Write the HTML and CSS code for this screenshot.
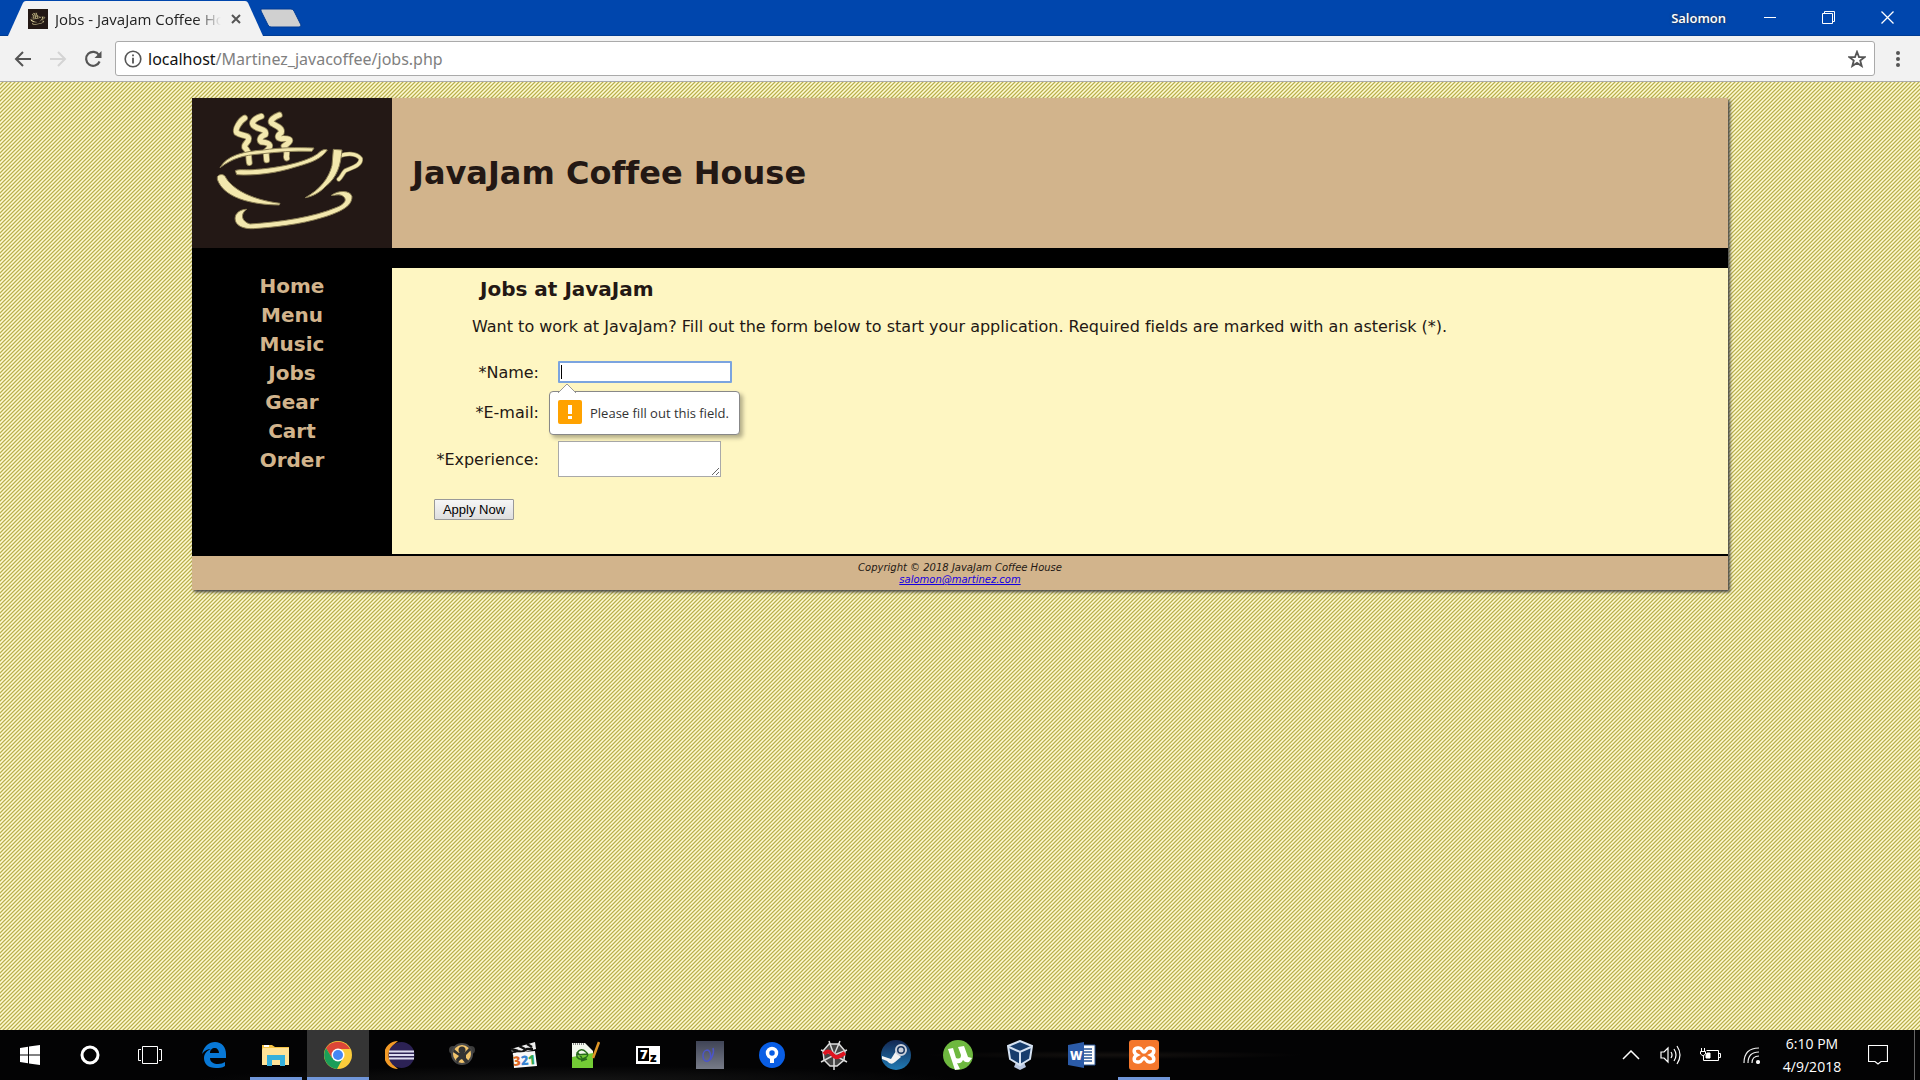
FILE: index.html
```html
<!DOCTYPE html>
<html lang="en">
<head>
<meta charset="utf-8">
<title>Jobs - JavaJam Coffee House</title>
<link rel="stylesheet" href="styles.css">
</head>
<body>
<svg class="defs" aria-hidden="true">
  <symbol id="cup" viewBox="36 24 600 450">
    <g fill="none" stroke-linecap="round" stroke-linejoin="round">
      <g stroke="#8b7f55" stroke-width="20">
        <path d="M194 84C180 92 164 118 170 128C182 138 206 134 206 146C206 158 192 160 194 172C210 188 204 194 208 218" />
        <path d="M244 79C226 84 212 96 220 106C234 120 262 116 256 134C238 140 238 152 244 156C276 158 274 170 258 184L260 210" />
        <path d="M298 75C284 80 266 92 276 100C290 108 308 114 304 128C292 136 290 144 304 146C340 144 334 154 312 168C328 190 316 192 320 204" />
        <path d="M478 198C500 190 528 188 542 206C544 226 518 232 496 242C486 252 486 260 476 268" stroke-width="14"/>
      </g>
      <g stroke="#f3e8ae" stroke-width="15">
        <path d="M194 84C180 92 164 118 170 128C182 138 206 134 206 146C206 158 192 160 194 172C210 188 204 194 208 218" />
        <path d="M244 79C226 84 212 96 220 106C234 120 262 116 256 134C238 140 238 152 244 156C276 158 274 170 258 184L260 210" />
        <path d="M298 75C284 80 266 92 276 100C290 108 308 114 304 128C292 136 290 144 304 146C340 144 334 154 312 168C328 190 316 192 320 204" />
        <path d="M478 198C500 190 528 188 542 206C544 226 518 232 496 242C486 252 486 260 476 268" stroke-width="10"/>
      </g>
    </g>
    <g fill="#f3e8ae" stroke="#8b7f55" stroke-width="3" stroke-linejoin="round">
      <path d="M120 233C140 196 190 184 250 180C300 172 350 172 402 174L396 184C340 182 290 186 240 192C190 196 160 204 120 233Z"/>
      <path d="M166 242C178 236 200 242 230 238C310 232 380 214 412 192C424 180 434 176 442 180C424 206 400 216 350 230C290 250 220 258 170 254Z"/>
      <path d="M112 260C120 250 134 252 138 264C160 300 220 330 300 340L298 345C210 344 130 322 112 268Z"/>
      <path d="M460 178L486 180C482 226 472 262 436 290C420 308 396 320 376 323C420 298 446 266 456 226Z"/>
      <path d="M200 358C180 372 184 394 210 402C300 396 400 382 470 352C500 340 502 324 484 316C474 312 460 318 454 316C474 300 512 300 516 320C516 350 480 366 430 382C360 404 280 412 220 416C176 418 158 396 168 374C176 362 188 358 200 358Z"/>
    </g>
  </symbol>
</svg>

<header class="titlebar">
  <div class="tab">
    <svg class="tab-shape" viewBox="0 0 257 36" preserveAspectRatio="none" aria-hidden="true"><path d="M0 36L15 3Q16 1 18 1H239Q241 1 242 3L257 36Z" fill="#f2f2f2"/></svg>
    <svg class="favicon" viewBox="0 0 20 20" aria-hidden="true"><rect width="20" height="20" fill="#231815"/><use href="#cup" width="20" height="20"/></svg>
    <span class="tab-title">Jobs - JavaJam Coffee House</span>
    <button class="plain tab-close" aria-label="Close tab"><svg width="10" height="10"><path d="M1 1L9 9M9 1L1 9" stroke="#555" stroke-width="2"/></svg></button>
  </div>
  <button class="plain new-tab" aria-label="New tab"><svg width="42" height="20"><path d="M1 1H31Q33 1 34 3L41 17Q41 19 39 19H11Q9 19 8 17L1 3Z" fill="#d0d0d0" stroke="#003b95"/></svg></button>
  <span class="profile">Salomon</span>
  <button class="plain control" aria-label="Minimize"><svg width="12" height="12"><path d="M0 5.500H12" stroke="#fff"/></svg></button>
  <button class="plain control" aria-label="Restore"><svg width="13" height="13" fill="none" stroke="#fff"><path d="M.5 2.500H10.500V12.500H.5ZM2.500 2V.5H12.500V10.500H11"/></svg></button>
  <button class="plain control" aria-label="Close"><svg width="13" height="13"><path d="M.5 .5L12.500 12.500M12.500 .5L.5 12.500" stroke="#fff" stroke-width="1.300"/></svg></button>
</header>

<div class="toolbar">
  <button class="plain nav-button" aria-label="Back"><svg width="18" height="18" fill="none" stroke="#555" stroke-width="2"><path d="M17 9H2M9 2L2 9L9 16"/></svg></button>
  <button class="plain nav-button" aria-label="Forward"><svg width="18" height="18" fill="none" stroke="#d4d4d4" stroke-width="2"><path d="M1 9H16M9 2L16 9L9 16"/></svg></button>
  <button class="plain nav-button" aria-label="Reload"><svg width="18" height="18"><path d="M15 5A7 7 0 1 0 15.600 11.500" fill="none" stroke="#555" stroke-width="2.200"/><path d="M17.500 1V8H10.500Z" fill="#555"/></svg></button>
  <div class="address">
    <svg width="18" height="18" aria-hidden="true"><circle cx="9" cy="9" r="7.800" fill="none" stroke="#555" stroke-width="1.600"/><path d="M9 4.500V6.200M9 7.800V13.500" stroke="#555" stroke-width="1.800"/></svg>
    <span class="url"><b>localhost</b>/Martinez_javacoffee/jobs.php</span>
    <button class="plain" aria-label="Bookmark"><svg width="18" height="18"><path d="M9 1.800L11 7L16.500 7.200L12.200 10.600L13.700 16L9 12.900L4.300 16L5.800 10.600L1.500 7.200L7 7Z" fill="none" stroke="#555" stroke-width="1.800"/></svg></button>
  </div>
  <button class="plain menu" aria-label="Menu"><svg width="4" height="18" fill="#555"><circle cx="2" cy="3" r="2"/><circle cx="2" cy="9" r="2"/><circle cx="2" cy="15" r="2"/></svg></button>
</div>

<div class="viewport">
  <div class="wrapper">
    <header class="banner">
      <svg class="logo" role="img" aria-label="Coffee cup"><use href="#cup" width="200" height="150"/></svg>
      <h1>JavaJam Coffee House</h1>
    </header>
    <div class="columns">
      <nav class="site-nav">
        <a href="#">Home</a>
        <a href="#">Menu</a>
        <a href="#">Music</a>
        <a href="#">Jobs</a>
        <a href="#">Gear</a>
        <a href="#">Cart</a>
        <a href="#">Order</a>
      </nav>
      <main>
        <h2>Jobs at JavaJam</h2>
        <p>Want to work at JavaJam? Fill out the form below to start your application. Required fields are marked with an asterisk (*).</p>
        <form>
          <label for="name">*Name:</label>
          <div class="field">
            <input class="focused" id="name" type="text" required>
            <span class="caret"></span>
            <div class="bubble" role="alert">
              <svg class="arrow" width="18" height="10" aria-hidden="true"><path d="M0 10L9 1L18 10" fill="#fff" stroke="#999"/></svg>
              <svg width="24" height="24" aria-hidden="true"><rect width="24" height="24" rx="2" fill="#ffa200"/><path d="M10 5H14V14H10ZM10 16H14V19H10Z" fill="#fff"/></svg>
              <span>Please fill out this field.</span>
            </div>
          </div>
          <label for="email">*E-mail:</label>
          <div class="field"><input id="email" type="email" required></div>
          <label for="experience">*Experience:</label>
          <div class="field"><textarea id="experience" required></textarea></div>
          <button class="apply" type="button">Apply Now</button>
        </form>
      </main>
    </div>
    <footer>Copyright © 2018 JavaJam Coffee House<br><a href="#">salomon@martinez.com</a></footer>
  </div>
</div>

<div class="taskbar">
  <button class="plain system" aria-label="Start"><svg width="20" height="20" fill="#fff"><path d="M0 3L8 1.700V9.500H0ZM9 1.500L20 0V9.500H9ZM0 10.500H8V18.300L0 17ZM9 10.500H20V20L9 18.500Z"/></svg></button>
  <button class="plain system" aria-label="Search"><svg width="20" height="20"><circle cx="10" cy="10" r="8" fill="none" stroke="#fff" stroke-width="3"/></svg></button>
  <button class="plain system" aria-label="Task view"><svg width="24" height="18" fill="none" stroke="#fff"><path d="M4.500 .5H19.500V17.500H4.500ZM3 3.500H.5V14.500H3M21 3.500H23.500V14.500H21"/></svg></button>
  <button class="plain app" aria-label="Edge"><svg width="28" height="28"><path d="M2 13C4 5 9 1 15 1C22 1 26 6 26 13V17H10C10 21 14 23 18 23C21 23 23 22 25 21V25C22 27 19 27 16 27C8 27 4 23 4 17C4 12 8 9 11 8C8 8 5 9 2 13ZM10 12H19C19 9 17 7 15 7C12 7 10 9 10 12Z" fill="#0878d6"/></svg></button>
  <button class="plain app open" aria-label="File Explorer"><svg width="28" height="28"><path d="M0 4V4H10L13 6H27V24H0Z" fill="#f5c344"/><path d="M1 7H27V24H0V9Z" fill="#ffe398"/><path d="M2 4H7V6H2Z" fill="#fff"/><path d="M5 14H23V25H18V19H10V25H5Z" fill="#35b0dc"/></svg></button>
  <button class="plain app open active" aria-label="Chrome"><svg width="28" height="28"><circle cx="14" cy="14" r="14" fill="#fbcc3b"/><path d="M14 14L14 8H26A14 14 0 0 0 2 7L8 17Z" fill="#dc4638"/><path d="M2 7A14 14 0 0 0 13 28L19 17L14 14L8 17Z" fill="#1b9e58"/><circle cx="14" cy="14" r="6.500" fill="#fff"/><circle cx="14" cy="14" r="5" fill="#4487f4"/></svg></button>
  <button class="plain app" aria-label="Eclipse"><svg width="30" height="28"><path d="M13 0A14 14 0 0 0 13 28A17 17 0 0 1 13 0Z" fill="#f29a26"/><circle cx="16.500" cy="14" r="13" fill="#2c2255"/><path d="M4 10.500H29M4 14H29M4 17.500H29" stroke="#dcdcf0" stroke-width="2"/></svg></button>
  <button class="plain app" aria-label="Games"><svg width="28" height="28"><circle cx="5" cy="9" r="4" fill="#3c3c3c"/><circle cx="23" cy="9" r="4" fill="#3c3c3c"/><circle cx="14" cy="13" r="10" fill="#f3c56c" stroke="#484848" stroke-width="2"/><circle cx="14" cy="9" r="3.500" fill="#333"/><path d="M6 8L11 12H16L21 7L23 9L18 14V17L21 20L18 23L14 18L12 19L9 23L8 18L11 15L5 11Z" fill="#333"/></svg></button>
  <button class="plain app" aria-label="Media Player Classic"><svg width="28" height="28"><path d="M1 8L25 1L26 8L3 14Z" fill="#eee"/><path d="M1 8L8 10M9 5L15 8M17 3L22 6M2 12L7 10L12 11L17 8L23 8" stroke="#111" stroke-width="2.500" fill="none"/><path d="M3 12L25 10L27 25L4 27Z" fill="#f8f8f8"/><g class="icon-text" font-size="13" transform="rotate(-5 14 20)"><text x="3" y="24" fill="#df6a25">3</text><text x="11" y="24" fill="#3984d3">2</text><text x="18" y="24" fill="#34a854">1</text></g></svg></button>
  <button class="plain app" aria-label="Notepad++"><svg width="28" height="28"><path d="M0 2H13L21 10V27H0Z" fill="#f3f8ee"/><path d="M0 16L21 12V27H0Z" fill="#73cc35"/><path d="M1 3H13" stroke="#888" stroke-width="2" stroke-dasharray="1 1"/><path d="M5 12Q9 6 14 11Q18 14 13 17Q8 20 5 16ZM4 14L15 13M9 20L15 18M6 12L10 17" stroke="#286b1b" fill="none" stroke-width="1.500"/><path d="M27 1L21 17" stroke="#df9727" stroke-width="2.500"/></svg></button>
  <button class="plain app" aria-label="7-Zip"><svg width="26" height="20"><rect x="1" y="1" width="24" height="18" fill="#fff"/><path d="M3 3H14V16H3Z"/><g class="icon-text"><text x="5" y="14" font-size="13" fill="#fff">7</text><text x="15" y="17" font-size="13">z</text></g></svg></button>
  <button class="plain app" aria-label="Brackets"><svg width="28" height="28"><defs><linearGradient id="steel" x2="0" y2="1"><stop stop-color="#3f4456"/><stop offset="1" stop-color="#777b88"/></linearGradient></defs><rect width="28" height="28" fill="url(#steel)"/><path d="M11 9C5 10 6 22 12 20C17 17 14 9 11 9M17 7C19 13 14 19 14 19" fill="none" stroke="#4c55c9" stroke-width="1.500"/></svg></button>
  <button class="plain app" aria-label="Sourcetree"><svg width="26" height="26"><circle cx="13" cy="13" r="13" fill="#095ee5"/><circle cx="13" cy="11" r="4.500" fill="none" stroke="#fff" stroke-width="3.500"/><path d="M13 15V21" stroke="#fff" stroke-width="4"/></svg></button>
  <button class="plain app" aria-label="Spider"><svg width="28" height="30"><path d="M9 4L19 4L25 11L24 20L17 26H10L4 20L3 11Z" fill="#444" stroke="#ddd" stroke-width="1.500"/><path d="M9 1L14 15L20 1M1 10L14 15L27 10M1 22L14 15L27 22M14 15V30" fill="none" stroke="#ddd" stroke-width="1.500"/><path d="M4 14Q8 9 12 14T20 16L25 13" fill="none" stroke="#df1420" stroke-width="4"/></svg></button>
  <button class="plain app" aria-label="Steam"><svg width="30" height="30"><defs><linearGradient id="steam" x2="0" y2="1"><stop stop-color="#132752"/><stop offset="1" stop-color="#207bb5"/></linearGradient></defs><circle cx="15" cy="15" r="15" fill="url(#steam)"/><path d="M1 16L10 19L15 11L20 17L14 22Q10 26 6 21L1 19Z" fill="#f2f2f2"/><circle cx="20" cy="10" r="5" fill="#183660" stroke="#cbd0da" stroke-width="2"/><circle cx="20" cy="10" r="2.500" fill="#cbd0da"/></svg></button>
  <button class="plain app" aria-label="uTorrent"><svg width="30" height="30"><circle cx="15" cy="15" r="15" fill="#6eb83f"/><path d="M5 9L10 8L13 18Q18 20 18 15L15 7L21 6L25 17L29 18L26 22Q22 23 20 20Q18 24 14 23L17 29L12 30Z" fill="#fff"/></svg></button>
  <button class="plain app" aria-label="VirtualBox"><svg width="26" height="30"><path d="M10 20H16L19 27L13 30L7 27Z" fill="#b8c6df"/><path d="M1 6L13 1L25 6L23 19L13 25L3 19Z" fill="#173d6d" stroke="#d5e2f2" stroke-width="2"/><path d="M2 7L13 12L24 7M13 12V24" fill="none" stroke="#d5e2f2" stroke-width="2"/></svg></button>
  <button class="plain app" aria-label="Word"><svg width="28" height="26"><path d="M15 3H27V23H15Z" fill="#fff" stroke="#2b5797"/><path d="M16 7H24M16 10H24M16 13H24M16 16H24M16 19H24" stroke="#2b5797" stroke-width="1.500"/><path d="M0 3L16 0V26L0 23Z" fill="#2b5ba8"/><text class="icon-text" x="2" y="18" font-size="12" fill="#fff">W</text></svg></button>
  <button class="plain app open" aria-label="XAMPP"><svg width="30" height="30"><rect width="30" height="30" rx="3" fill="#f4772c"/><path d="M10 8C4 7 4 13 8 15C4 17 4 23 10 22C13 22 13 18 15 18C17 18 17 22 20 22C26 23 26 17 22 15C26 13 26 7 20 8C17 8 17 12 15 12C13 12 13 8 10 8Z" fill="none" stroke="#fff" stroke-width="3.500"/></svg></button>
  <div class="tray">
    <button class="plain" aria-label="Show hidden icons"><svg width="18" height="10"><path d="M1 9L9 1L17 9" fill="none" stroke="#fff" stroke-width="1.500"/></svg></button>
    <button class="plain" aria-label="Volume"><svg width="22" height="20" fill="none" stroke="#fff" stroke-width="1.200"><path d="M1 7H4L8 3V17L4 13H1ZM11 7Q13 10 11 13M14 4Q18 10 14 16M17 1Q23 10 17 19"/></svg></button>
    <button class="plain" aria-label="Battery"><svg width="22" height="16" fill="none" stroke="#fff"><path d="M6.500 3.500H18.500V13.500H3.500V9M19 6.500H20.500V10.500H19M1.500 1V4M4.500 1V4M.5 4.500H5.500V7L3 9L.5 7Z"/><path d="M7 6H10V11H6V8Z" fill="#fff"/></svg></button>
    <button class="plain" aria-label="Network"><svg width="17" height="17" fill="none" stroke="#eee" stroke-width="1.200"><path d="M1 16Q1 1 16 1M5 16Q5 5 16 5M9 16Q9 9 16 9"/><circle cx="15" cy="15" r="1.500" fill="#fff"/></svg></button>
    <div class="clock">6:10 PM<br>4/9/2018</div>
    <button class="plain notes" aria-label="Notifications"><svg width="20" height="20"><path d="M.5 .5H19.500V16.500H13L10 19L7 16.500H.5Z" fill="none" stroke="#fff" stroke-width="1.200"/></svg></button>
  </div>
</div>
</body>
</html>
```
FILE: styles.css
```css
* { box-sizing: border-box; }

body {
  margin: 0;
  min-height: 100vh;
  display: flex;
  flex-direction: column;
  font-family: "Open Sans", sans-serif;
  font-variant-ligatures: none;
  color: #231814;
}

.defs { position: absolute; width: 0; height: 0; }
svg { display: block; }

.plain {
  display: flex;
  align-items: center;
  justify-content: center;
  padding: 0;
  border: 0;
  background: none;
}

/* Browser window */
.titlebar {
  display: flex;
  align-items: center;
  height: 36px;
  padding: 0 3px 0 8px;
  background: #0046ad;
  border-bottom: 1px solid #003c94;
}

.tab {
  position: relative;
  display: flex;
  align-items: center;
  width: 255px;
  height: 36px;
  padding: 2px 22px 0 20px;
}

.tab-shape { position: absolute; inset: 0; width: 100%; height: 100%; }
.favicon, .tab-title, .tab-close { position: relative; }
.favicon { width: 20px; height: 20px; }

.tab-title {
  flex: 1;
  margin: 0 10px 0 7px;
  overflow: hidden;
  white-space: nowrap;
  font-size: 15px;
  color: #222;
  mask-image: linear-gradient(to right, #000 85%, transparent);
}

.new-tab { margin-left: -3px; }

.profile {
  margin-left: auto;
  margin-right: 14px;
  font-size: 13px;
  font-weight: 600;
  color: #fff;
  text-shadow: 0 0 3px #333;
}

.control { width: 59px; height: 34px; }

.toolbar {
  display: flex;
  align-items: center;
  height: 46px;
  padding: 0 20px 0 5px;
  background: #f2f2f2;
  border-bottom: 1px solid #aaa;
}

.nav-button { width: 35px; height: 35px; }

.address {
  flex: 1;
  display: flex;
  align-items: center;
  gap: 6px;
  height: 35px;
  margin: 0 21px 0 5px;
  padding: 0 8px;
  border: 1px solid #aaa;
  border-radius: 3px;
  background: #fff;
}

.url { flex: 1; font-family: "Noto Sans", sans-serif; font-size: 16px; color: #808080; }
.url b { font-weight: 400; color: #111; }

/* Site */
.viewport {
  flex: 1;
  padding: 16px 0;
  background: linear-gradient(135deg, #fffbd5 20%, #e2dc9c 20%, #e2dc9c 30%, #b9af4e 30%, #b9af4e 45%, #e2dc9c 45%, #e2dc9c 55%, #fffbd5 55%, #fffbd5 70%, #e2dc9c 70%, #e2dc9c 80%, #b9af4e 80%) 0 0 / 4px 4px;
  font-family: Verdana, "DejaVu Sans", sans-serif;
}

.wrapper {
  width: 80%;
  margin: 0 auto;
  background: #000;
  box-shadow: 2px 2px 3px #444;
}

.banner { display: flex; align-items: center; background: #d2b48c; }
.logo { width: 200px; height: 150px; background: #231815; }
h1 { margin: 0 20px; font-size: 32px; }

.columns {
  display: grid;
  grid-template-columns: 200px 1fr;
  padding: 20px 0 2px;
}

.site-nav {
  display: flex;
  flex-direction: column;
  align-items: center;
  padding-top: 4px;
}

.site-nav a {
  font-size: 20px;
  font-weight: 700;
  line-height: 29px;
  color: #d2b48c;
  text-decoration: none;
}

main { padding: 9px 42px 34px; background: #fef6c2; }
h2 { margin: 0 0 13px 46px; font-size: 20px; line-height: 24px; }
p { margin: 0 0 21px 38px; font-size: 16px; line-height: 26px; }

form {
  display: grid;
  grid-template-columns: 105px auto;
  align-items: center;
  justify-content: start;
  gap: 18px 19px;
}

label { text-align: right; white-space: nowrap; }
.field { position: relative; }

input, textarea {
  display: block;
  width: 174px;
  height: 22px;
  border: 1px solid #a9a9a9;
  background: #fff;
}

textarea { width: 163px; height: 36px; }
input.focused { border: 2px solid #7ba4df; border-radius: 1px; }

.caret {
  position: absolute;
  left: 3px;
  top: 4px;
  width: 1px;
  height: 14px;
  background: #000;
}

.bubble {
  position: absolute;
  z-index: 1;
  top: 30px;
  left: -9px;
  display: flex;
  gap: 8px;
  width: 191px;
  height: 44px;
  padding: 8px;
  border: 1px solid #888;
  border-radius: 4px;
  background: #fff;
  box-shadow: 3px 3px 4px rgba(0, 0, 0, .3);
  font: 13px/26px "Open Sans", sans-serif;
  color: #333;
  white-space: nowrap;
}

.arrow { position: absolute; left: 8px; top: -9px; }

.apply {
  grid-column: 1 / -1;
  justify-self: start;
  width: 80px;
  height: 21px;
  margin-top: 4px;
  padding: 0;
  border: 1px solid #999;
  border-radius: 1px;
  background: linear-gradient(#f6f6f6, #dedede);
  font: 13px "Liberation Sans", sans-serif;
  color: #000;
}

footer {
  padding: 6px 0 4px;
  background: #d2b48c;
  font-size: 10px;
  font-style: italic;
  line-height: 12px;
  text-align: center;
}

footer a { color: #1500e0; }

/* Taskbar */
.taskbar {
  display: flex;
  height: 50px;
  background:
    radial-gradient(ellipse at 30% 100%, #141414, transparent 20%),
    radial-gradient(ellipse at 58% 50%, #14110f, transparent 12%),
    #030304;
}

.system { width: 60px; }
.system + .app { margin-left: 3px; }
.app { width: 62px; border-bottom: 3px solid transparent; padding-top: 3px; }
.app.open { width: 52px; margin: 0 5px; border-color: #7096d9; }
.app.active { width: 62px; margin: 0; background: #353535; }
.icon-text { font-family: "Open Sans", sans-serif; font-weight: 800; }

.tray {
  display: flex;
  align-items: center;
  margin-left: auto;
  margin-right: 5px;
  padding-right: 11px;
  border-right: 1px solid #666;
}

.tray .plain { width: 40px; height: 50px; }

.clock {
  width: 82px;
  font-size: 14px;
  line-height: 23px;
  text-align: center;
  color: #fff;
}

.tray .notes { width: 50px; }
```
